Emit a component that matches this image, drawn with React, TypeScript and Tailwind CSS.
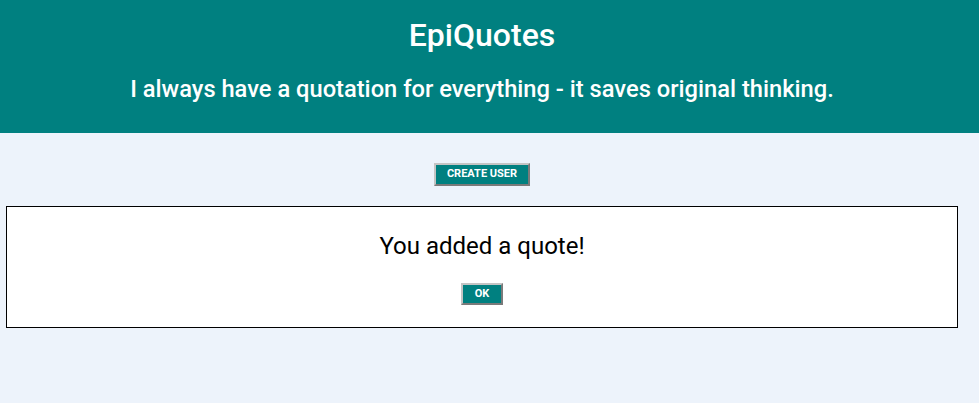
export default function App() {
  return (
    <div className="min-h-[403px] w-full bg-[#edf3fb] font-['Roboto',sans-serif]">
      <header className="h-[133px] bg-[#008080] text-white">
        <div className="flex w-[964px] flex-col items-center pt-[15px]">
          <h1 className="text-[32px] font-medium leading-[40px]">EpiQuotes</h1>
          <h2 className="mt-[20px] text-[23.7px] font-medium leading-[28px]">
            I always have a quotation for everything - it saves original thinking.
          </h2>
        </div>
      </header>

      <div className="w-[964px]">
        <div className="flex justify-center pt-[30px]">
          <button className="h-[23px] w-[96px] border-2 border-t-[#c4c4c4] border-l-[#c4c4c4] border-r-[#7a7a7a] border-b-[#7a7a7a] bg-[#008080] text-[11px] font-bold text-white">
            CREATE USER
          </button>
        </div>

        <div className="mx-[6px] mt-[20px] flex h-[122px] w-[952px] flex-col items-center border border-black bg-white pt-[24px]">
          <p className="text-[24px] leading-[30px] text-black">You added a quote!</p>
          <button className="mt-[22px] h-[22px] w-[42px] border-2 border-t-[#c4c4c4] border-l-[#c4c4c4] border-r-[#7a7a7a] border-b-[#7a7a7a] bg-[#008080] text-[11px] font-bold text-white">
            OK
          </button>
        </div>
      </div>
    </div>
  );
}
